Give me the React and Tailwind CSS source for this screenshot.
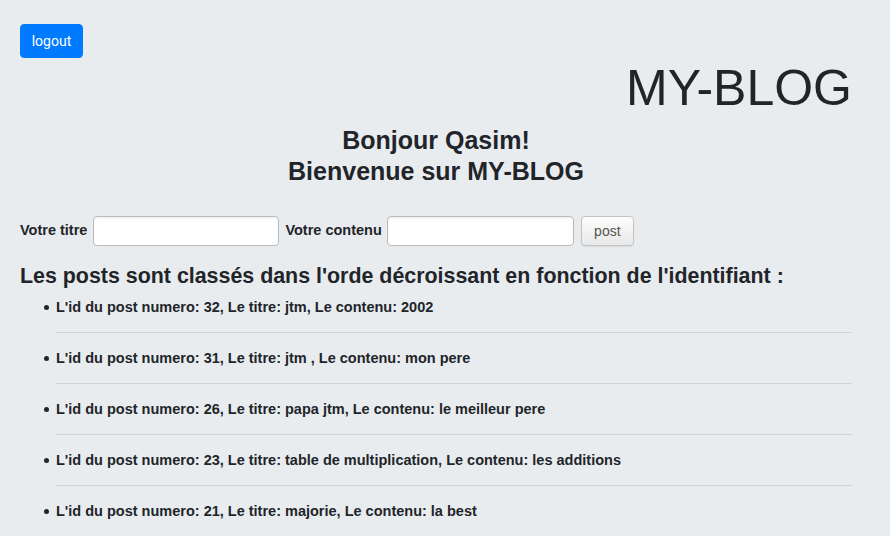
import React from "react";

const posts = [
  "L'id du post numero: 32, Le titre: jtm, Le contenu: 2002",
  "L'id du post numero: 31, Le titre: jtm , Le contenu: mon pere",
  "L'id du post numero: 26, Le titre: papa jtm, Le contenu: le meilleur pere",
  "L'id du post numero: 23, Le titre: table de multiplication, Le contenu: les additions",
  "L'id du post numero: 21, Le titre: majorie, Le contenu: la best",
];

export default function App() {
  return (
    <div className="min-h-[536px] bg-[#e9ecef] text-[#212529] font-['Liberation_Sans',Arial,sans-serif] pl-5 pr-[38px] pt-6 overflow-hidden">
      <button className="h-[34px] w-[63px] rounded-[4px] bg-[#007bff] text-white text-[14px] font-['Roboto',sans-serif] border border-[#007bff]">
        logout
      </button>
      <h1 className="text-right text-[50px] leading-[58px] mt-[1px]">MY-BLOG</h1>
      <h2 className="text-center text-[25px] leading-[31px] font-bold mt-[8px]">
        Bonjour Qasim!
        <br />
        Bienvenue sur MY-BLOG
      </h2>
      <form className="flex items-center mt-[29px] text-[14.5px] font-bold">
        <label>Votre titre</label>
        <input className="ml-[6px] w-[186px] h-[30px] bg-white border border-[#bbb] rounded-[4px] shadow-[inset_0_1px_2px_rgba(0,0,0,0.08)]" />
        <label className="ml-[6px]">Votre contenu</label>
        <input className="ml-[5px] w-[187px] h-[30px] bg-white border border-[#bbb] rounded-[4px] shadow-[inset_0_1px_2px_rgba(0,0,0,0.08)]" />
        <button type="button" className="ml-[7px] w-[53px] h-[30px] rounded-[4px] border border-[#c4c4c4] bg-gradient-to-b from-[#fdfdfd] to-[#e8e8e8] text-[#555] font-normal text-[14px] shadow-[0_1px_1px_rgba(0,0,0,0.08)]">
          post
        </button>
      </form>
      <h3 className="text-[21.4px] leading-[24px] font-bold mt-[18px]">
        Les posts sont classés dans l'orde décroissant en fonction de l'identifiant :
      </h3>
      <ul className="pl-[36px] mt-[9px] text-[14.5px] font-bold">
        {posts.map((p, i) => (
          <li key={i} className="relative leading-[20px]">
            <span className="absolute left-[-12px] top-[8px] w-[5px] h-[5px] rounded-full bg-[#212529]" />
            {p}
            {i < posts.length - 1 && <hr className="my-[15px] border-t border-[#d0d3d7]" />}
          </li>
        ))}
      </ul>
    </div>
  );
}
